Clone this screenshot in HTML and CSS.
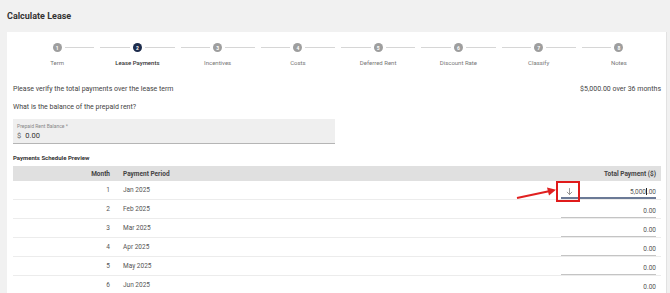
FILE: index.html
```html
<!DOCTYPE html>
<html lang="en">
<head>
  <meta charset="UTF-8" />
  <title>Calculate Lease</title>
  <link rel="stylesheet" href="styles.css">
</head>
<body>
  <div class="page-head">
    <h1>Calculate Lease</h1>
  </div>

  <div class="card">
    <ol class="stepper">
      <li class="step first"><div class="track"><span class="bar"></span><span class="dot">1</span><span class="bar"></span></div><span class="label">Term</span></li>
      <li class="step active"><div class="track"><span class="bar"></span><span class="dot">2</span><span class="bar"></span></div><span class="label">Lease Payments</span></li>
      <li class="step"><div class="track"><span class="bar"></span><span class="dot">3</span><span class="bar"></span></div><span class="label">Incentives</span></li>
      <li class="step"><div class="track"><span class="bar"></span><span class="dot">4</span><span class="bar"></span></div><span class="label">Costs</span></li>
      <li class="step"><div class="track"><span class="bar"></span><span class="dot">5</span><span class="bar"></span></div><span class="label">Deferred Rent</span></li>
      <li class="step"><div class="track"><span class="bar"></span><span class="dot">6</span><span class="bar"></span></div><span class="label">Discount Rate</span></li>
      <li class="step"><div class="track"><span class="bar"></span><span class="dot">7</span><span class="bar"></span></div><span class="label">Classify</span></li>
      <li class="step last"><div class="track"><span class="bar"></span><span class="dot">8</span><span class="bar"></span></div><span class="label">Notes</span></li>
    </ol>

    <div class="summary">
      <p>Please verify the total payments over the lease term</p>
      <p>$5,000.00 over 36 months</p>
    </div>

    <p class="question">What is the balance of the prepaid rent?</p>

    <div class="field">
      <label>Prepaid Rent Balance *</label>
      <div class="field-value"><span class="prefix">$</span>0.00</div>
    </div>

    <h3>Payments Schedule Preview</h3>

    <table class="schedule">
      <thead>
        <tr>
          <th class="col-month">Month</th>
          <th class="col-period">Payment Period</th>
          <th class="col-total">Total Payment ($)</th>
        </tr>
      </thead>
      <tbody>
        <tr>
          <td class="col-month">1</td>
          <td class="col-period">Jan 2025</td>
          <td class="col-total">
            <div class="amount focused">
              <span class="fill-down">
                <svg width="9" height="9" viewBox="0 0 24 24"><path d="M12 3v17M5 13l7 7 7-7" fill="none" stroke="#777" stroke-width="2"/></svg>
              </span>
              5,000<span class="caret"></span>.00
              <span class="callout-box"></span>
              <svg class="callout-arrow" width="44" height="14" viewBox="0 0 44 14"><path d="M1 12 L34 5" stroke="#e02020" stroke-width="2" fill="none"/><path d="M31 1.5 L40 3.8 L33 9.5 Z" fill="#e02020"/></svg>
            </div>
          </td>
        </tr>
        <tr><td class="col-month">2</td><td class="col-period">Feb 2025</td><td class="col-total"><div class="amount">0.00</div></td></tr>
        <tr><td class="col-month">3</td><td class="col-period">Mar 2025</td><td class="col-total"><div class="amount">0.00</div></td></tr>
        <tr><td class="col-month">4</td><td class="col-period">Apr 2025</td><td class="col-total"><div class="amount">0.00</div></td></tr>
        <tr><td class="col-month">5</td><td class="col-period">May 2025</td><td class="col-total"><div class="amount">0.00</div></td></tr>
        <tr><td class="col-month">6</td><td class="col-period">Jun 2025</td><td class="col-total"><div class="amount">0.00</div></td></tr>
      </tbody>
    </table>
  </div>
</body>
</html>
```

FILE: styles.css
```css
body {
  margin: 0;
  font-family: Roboto, "Liberation Sans", sans-serif;
  background: #f1f1f1;
  color: #333;
  overflow: hidden;
}

.page-head {
  height: 32px;
  padding: 0 7px;
  display: flex;
  align-items: center;
}

.page-head h1 {
  margin: 0;
  font-size: 9px;
  font-weight: bold;
  color: #333;
}

.card {
  background: white;
  margin: 0 3px 0 7px;
  border-right: 1px solid #e2e2e2;
  padding: 11px 5px 0 6px;
  min-height: 300px;
}

/* stepper */
.stepper {
  list-style: none;
  margin: 0 2px 0 4px;
  padding: 0;
  display: grid;
  grid-template-columns: repeat(8, 1fr);
}

.step {
  display: flex;
  flex-direction: column;
  align-items: center;
}

.track {
  width: 100%;
  display: flex;
  align-items: center;
}

.bar {
  flex: 1;
  height: 1px;
  background: #d6d6d6;
  margin: 0 3px;
}

.step.first .bar:first-child,
.step.last .bar:last-child {
  visibility: hidden;
}

.dot {
  width: 9px;
  height: 9px;
  border-radius: 50%;
  background: #9e9e9e;
  color: white;
  font-size: 5px;
  font-weight: bold;
  display: flex;
  align-items: center;
  justify-content: center;
}

.step.active .dot {
  background: #1d2c4c;
}

.label {
  margin-top: 7px;
  font-size: 6px;
  color: #777;
}

.step.active .label {
  color: #333;
  font-weight: 500;
}

/* intro text */
.summary {
  display: flex;
  justify-content: space-between;
  margin-top: 19px;
}

.summary p,
.question {
  margin: 0;
  font-size: 7px;
  color: #444;
}

.question {
  margin-top: 10px;
}

.field {
  width: 314px;
  margin-top: 8px;
  background: #efefef;
  border-bottom: 1px solid #b5b5b5;
  padding: 4px 4px 3px;
}

.field label {
  display: block;
  font-size: 5px;
  color: #888;
}

.field-value {
  margin-top: 2px;
  font-size: 7.5px;
  color: #333;
}

.prefix {
  margin-right: 4px;
  color: #666;
}

h3 {
  margin: 10px 0 5px;
  font-size: 6px;
  font-weight: bold;
  color: #333;
}

/* schedule */
.schedule {
  width: 100%;
  border-collapse: collapse;
  font-size: 6.5px;
}

.schedule th {
  background: #e0e0e0;
  height: 15px;
  font-weight: bold;
  color: #444;
  padding: 0;
}

.schedule td {
  height: 18px;
  border-bottom: 1px solid #ececec;
  padding: 0;
  color: #555;
}

.col-month {
  width: 97px;
  text-align: right;
  padding-right: 6px !important;
}

.col-period {
  text-align: left;
  padding-left: 7px !important;
}

.col-total {
  text-align: right;
  padding-right: 5px !important;
}

.amount {
  position: relative;
  display: inline-block;
  width: 95px;
  height: 14px;
  line-height: 16px;
  border-bottom: 1px solid #c4c4c4;
  margin-top: 2px;
}

.amount.focused {
  border-bottom: 2px solid #6b7a96;
  height: 13px;
}

.fill-down {
  position: absolute;
  left: 4px;
  top: 3px;
  line-height: 0;
}

.caret {
  display: inline-block;
  width: 1px;
  height: 7px;
  background: #222;
  vertical-align: -1px;
}

.callout-box {
  position: absolute;
  left: -5px;
  top: -3px;
  width: 20px;
  height: 17px;
  border: 2px solid #e01b1b;
}

.callout-arrow {
  position: absolute;
  left: -45px;
  top: 2px;
}
```
